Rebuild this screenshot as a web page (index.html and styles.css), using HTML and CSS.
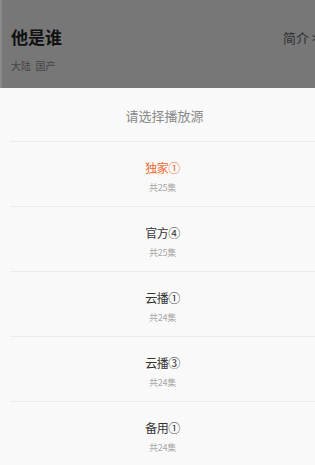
FILE: index.html
```html
<!DOCTYPE html>
<html lang="zh">
<head>
    <meta charset="UTF-8">
    <meta name="viewport" content="width=device-width, initial-scale=1.0">
    <title>选择播放源</title>
    <link rel="stylesheet" href="styles.css">
</head>
<body>
    <header class="show-info">
        <div class="show-row">
            <h1 class="show-title">他是谁</h1>
            <span class="show-intro">简介 &gt;</span>
        </div>
        <div class="show-tags">大陆&nbsp; 国产</div>
    </header>

    <section class="source-sheet">
        <div class="sheet-head">请选择播放源</div>
        <ul class="source-list">
            <li class="source-item active">
                <div class="source-name">独家①</div>
                <div class="source-count">共25集</div>
            </li>
            <li class="source-item">
                <div class="source-name">官方④</div>
                <div class="source-count">共25集</div>
            </li>
            <li class="source-item">
                <div class="source-name">云播①</div>
                <div class="source-count">共24集</div>
            </li>
            <li class="source-item">
                <div class="source-name">云播③</div>
                <div class="source-count">共24集</div>
            </li>
            <li class="source-item">
                <div class="source-name">备用①</div>
                <div class="source-count">共24集</div>
            </li>
        </ul>
    </section>
</body>
</html>
```

FILE: styles.css
```css
html, body {
    margin: 0;
    padding: 0;
    height: 100%;
}

body {
    font-family: "Noto Sans CJK SC", "Noto Sans", sans-serif;
    background-color: #f9f9f9;
    overflow: hidden;
}

/* dimmed page behind the sheet */
.show-info {
    height: 88px;
    box-sizing: border-box;
    padding: 24px 0 0 9px;
    background-color: #777777;
    border-left: 2px solid #8a8a8a;
}

.show-row {
    display: flex;
    justify-content: space-between;
    align-items: center;
}

.show-title {
    margin: 0;
    font-size: 17px;
    font-weight: bold;
    line-height: 26px;
    color: #111;
}

.show-intro {
    font-size: 13px;
    color: #2e2e2e;
    white-space: nowrap;
    width: 32px;
    overflow: hidden;
}

.show-tags {
    margin-top: 9px;
    font-size: 10px;
    line-height: 14px;
    color: #444;
}

/* bottom sheet */
.source-sheet {
    background-color: #f9f9f9;
}

.sheet-head {
    height: 53px;
    padding-left: 14px;
    line-height: 56px;
    text-align: center;
    font-size: 13px;
    color: #8a8a8a;
}

.source-list {
    list-style: none;
    margin: 0;
    padding: 0;
}

.source-item {
    margin-left: 10px;
    padding: 18px 0 11px 0;
    border-top: 1px solid #ececec;
    text-align: center;
}

.source-name {
    font-size: 12px;
    line-height: 16px;
    letter-spacing: -0.5px;
    color: #333;
}

.source-item.active .source-name {
    color: #ef6a30;
}

.source-count {
    margin-top: 5px;
    font-size: 9px;
    line-height: 14px;
    letter-spacing: -0.3px;
    color: #a8a8a8;
}
```
